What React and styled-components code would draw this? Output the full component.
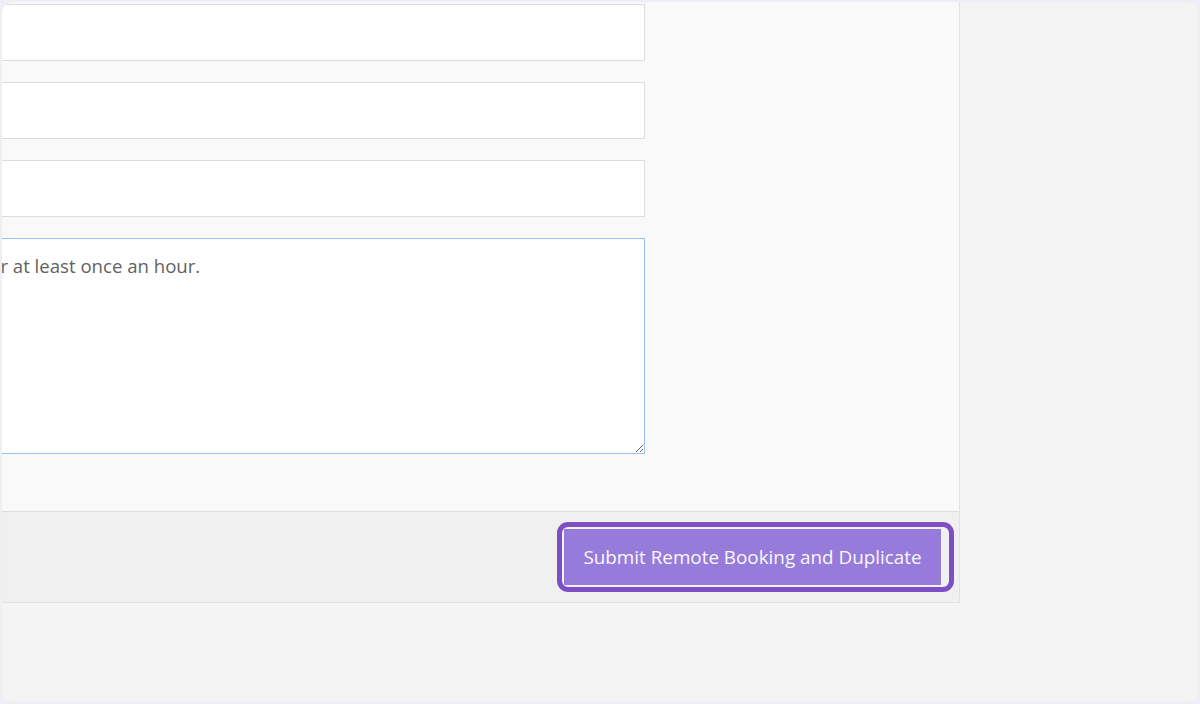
import React from 'react';
import styled, { createGlobalStyle } from 'styled-components';

const GlobalStyle = createGlobalStyle`
    html, body {
        margin: 0;
        background: #eeeff4;
        font-family: "Open Sans", "Noto Sans", sans-serif;
    }
`;

const Page = styled.div`
    height: 704px;
    padding: 2px;
    box-sizing: border-box;
`;

const Frame = styled.div`
    height: 100%;
    border-radius: 12px;
    background: #f4f4f4;
    overflow: hidden;
`;

const Panel = styled.div`
    width: 958px;
    box-sizing: border-box;
    border-right: 1px solid #e2e2e2;
`;

const Body = styled.div`
    background: #f9f9f9;
    padding: 2px 0 57px;
    overflow: hidden;
`;

const Fields = styled.div`
    display: flex;
    flex-direction: column;
    gap: 21px;
    margin-left: -269px;
    width: 912px;
`;

const TextInput = styled.input`
    display: block;
    height: 57px;
    box-sizing: border-box;
    border: 1px solid #dcdcdc;
    background: #fff;
    padding: 0 16px;
    font: 18.6px "Open Sans", sans-serif;
    color: #666;
    outline: none;
`;

const Notes = styled.textarea`
    display: block;
    height: 216px;
    box-sizing: border-box;
    border: 1px solid #9ec0f1;
    background: #fff;
    padding: 13px 16px;
    font: 18.6px/1.5 "Open Sans", sans-serif;
    color: #626262;
    outline: none;
    resize: vertical;
`;

const Footer = styled.div`
    height: 92px;
    box-sizing: border-box;
    border-top: 1px solid #dcdcdc;
    border-bottom: 1px solid #e0e0e0;
    background: #f0f0f0;
    display: flex;
    align-items: center;
    justify-content: flex-end;
    padding-right: 17px;
`;

const SubmitButton = styled.button`
    position: relative;
    width: 379px;
    height: 58px;
    box-sizing: border-box;
    border: 1px solid #f4f0fb;
    background: #967bda;
    color: #faf7ff;
    font: 18.85px "Open Sans", sans-serif;
    padding: 0;
    cursor: pointer;

    /* highlight ring drawn over the button */
    &::after {
        content: '';
        position: absolute;
        top: -7px;
        left: -7px;
        right: -13px;
        bottom: -7px;
        border: 5.5px solid #7e4fc4;
        border-radius: 11px;
        pointer-events: none;
    }
`;

const App = () => (
    <Page>
        <GlobalStyle />
        <Frame>
            <Panel>
                <Body>
                    <Fields>
                        <TextInput type="text" />
                        <TextInput type="text" />
                        <TextInput type="text" />
                        <Notes defaultValue="Please check on the customer at least once an hour." />
                    </Fields>
                </Body>
                <Footer>
                    <SubmitButton type="button">Submit Remote Booking and Duplicate</SubmitButton>
                </Footer>
            </Panel>
        </Frame>
    </Page>
);

export default App;
